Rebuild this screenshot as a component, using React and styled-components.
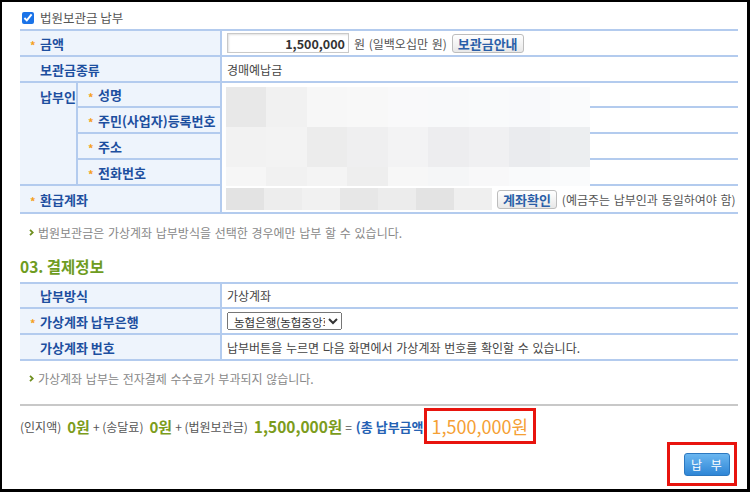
import styled, { createGlobalStyle } from "styled-components";

const LINE = "#b3cbee";
const LABEL_BG = "#eef4fc";
const LABEL_BLUE = "#1d4f9f";

const GlobalStyle = createGlobalStyle`
  html, body {
    margin: 0;
    padding: 0;
    background: #fff;
  }
  * {
    box-sizing: border-box;
  }
`;

const Frame = styled.div`
  width: 750px;
  height: 492px;
  border: solid #000;
  border-width: 2px 3px 3px 2px;
  padding: 7px 9px 0 18px;
  background: #fff;
  overflow: hidden;
  font-family: "Noto Sans CJK KR", "Noto Sans", sans-serif;
  color: #444;
`;

const CheckRow = styled.label`
  display: flex;
  align-items: center;
  height: 17px;
  margin: 0 0 3px 2px;
  font-size: 12.5px;
  color: #555;
  input {
    width: 12px;
    height: 12px;
    margin: 0 6px 0 0;
    accent-color: #1a73e8;
  }
`;

const FormGrid = styled.div`
  position: relative;
  display: grid;
  grid-template-columns: ${(p) => p.$cols};
  grid-template-rows: ${(p) => p.$rows};
  border-top: 2px solid ${LINE};
`;

const Label = styled.div`
  grid-column: span ${(p) => p.$span || 1};
  grid-row: span ${(p) => p.$rowSpan || 1};
  display: flex;
  align-items: ${(p) => (p.$top ? "flex-start" : "center")};
  padding: ${(p) => (p.$top ? "4px 0 0 10px" : "0 0 0 10px")};
  background: ${LABEL_BG};
  border-bottom: 2px solid ${LINE};
  border-right: 2px solid ${LINE};
  font-size: 13px;
  font-weight: bold;
  color: ${LABEL_BLUE};
  white-space: nowrap;
`;

const Star = styled.span`
  position: relative;
  top: 2px;
  display: inline-block;
  width: 10px;
  color: #f5a020;
  font-size: 11px;
  font-weight: bold;
  visibility: ${(p) => (p.$on ? "visible" : "hidden")};
`;

const Value = styled.div`
  display: flex;
  align-items: center;
  padding-left: ${(p) => p.$pl ?? 5}px;
  border-bottom: 2px solid ${LINE};
  font-size: 12px;
  color: #444;
  white-space: nowrap;
  word-spacing: 1px;
`;

const AmountInput = styled.input`
  width: 122px;
  height: 20px;
  padding: 0 3px 0 0;
  border: 1px solid #c9c9c9;
  box-shadow: inset 1px 1px 2px rgba(0, 0, 0, 0.12);
  text-align: right;
  font-family: inherit;
  font-size: 12.5px;
  font-weight: bold;
  color: #333;
  outline: none;
`;

const Muted = styled.span`
  margin-left: ${(p) => p.$ml || 0}px;
  font-size: 12px;
  color: #555;
`;

const GrayButton = styled.button`
  height: 19px;
  margin-left: ${(p) => p.$ml || 0}px;
  padding: 0 5px;
  border: 1px solid #bdbdbd;
  border-radius: 3px;
  background: linear-gradient(#ffffff, #e8e8e8);
  font-family: inherit;
  font-size: 13px;
  font-weight: bold;
  color: #2a5fa8;
  line-height: 17px;
  word-spacing: 0;
`;

const Mosaic = styled.div`
  display: grid;
  grid-template-columns: repeat(${(p) => p.$cols}, 1fr);
  grid-template-rows: ${(p) => p.$rows};
  width: ${(p) => p.$w}px;
  height: ${(p) => p.$h}px;
`;

const Overlay = styled.div`
  position: absolute;
  left: 202px;
  top: 56px;
  padding-left: 4px;
  background: #fff;
`;

const Tile = styled.div`
  background: ${(p) => p.$c};
`;

const Note = styled.div`
  display: flex;
  align-items: center;
  height: 18px;
  margin-top: ${(p) => p.$mt}px;
  padding-left: 9px;
  font-size: 12px;
  color: #888;
  word-spacing: 1px;
  svg {
    margin-right: 4px;
  }
`;

const Heading = styled.h3`
  height: 20px;
  margin: 15px 0 6px;
  font-size: 15.5px;
  font-weight: bold;
  line-height: 20px;
  color: #6e9c21;
`;

const BankSelect = styled.select`
  width: 115px;
  height: 18px;
  padding: 0 0 0 2px;
  font-family: inherit;
  font-size: 11.5px;
  color: #333;
`;

const Divider = styled.hr`
  margin: 17px 0 0;
  border: 0;
  border-top: 2px solid #c8c8c8;
`;

const SumRow = styled.div`
  display: flex;
  align-items: center;
  height: 36px;
  margin-top: 2px;
  white-space: pre;
`;

const Green = styled.span`
  margin: 0 3px 0 6px;
  font-size: ${(p) => p.$fs || 15}px;
  font-weight: bold;
  color: #7c9c1c;
`;

const Total = styled.span`
  margin-left: 4px;
  font-size: 13px;
  font-weight: bold;
  color: #2461b3;
`;

const RedBox = styled.div`
  display: flex;
  align-items: center;
  justify-content: ${(p) => (p.$center ? "center" : "flex-start")};
  flex: none;
  width: ${(p) => p.$w}px;
  height: ${(p) => p.$h}px;
  margin-left: ${(p) => p.$ml || 0}px;
  padding-left: ${(p) => (p.$center ? 0 : 4)}px;
  border: 3px solid #e8140e;
  background: #fff;
`;

const Orange = styled.span`
  font-size: 18px;
  color: #f5a034;
`;

const Footer = styled.div`
  display: flex;
  justify-content: flex-end;
  margin: -2px 1px 0 0;
`;

const PayButton = styled.button`
  width: 46px;
  height: 23px;
  margin-left: 9px;
  border: 1px solid #2c78c0;
  border-radius: 3px;
  background: linear-gradient(#6ab6f0, #2f86d6);
  font-family: inherit;
  font-size: 12px;
  color: #fff;
  letter-spacing: 3px;
  padding: 0 0 0 3px;
`;

const Arrow = () => (
  <svg width="5" height="7" viewBox="0 0 5 7">
    <polyline points="1,0.8 3.8,3.5 1,6.2" fill="none" stroke="#6f8f1f" strokeWidth="1.8" />
  </svg>
);

const PERSON_TILES = [
  "#e8e8e8", "#f1f1f1", "#f7f7f7", "#f8f8f8", "#f9f9fa", "#f8f9fa", "#f9fafb", "#f8f9fb", "#fafbfc",
  "#f2f2f2", "#f3f3f3", "#ececec", "#efeff0", "#f3f3f4", "#ededef", "#f0f0f2", "#eaebee", "#eceef0",
  "#f6f6f6", "#f1f1f1", "#f4f4f4", "#eeeeee", "#f7f7f7", "#f5f6f7", "#f8f8f9", "#f9fafb", "#fafbfc",
];

const ACCOUNT_TILES = ["#e3e3e3", "#ededed", "#f1f1f1", "#e7e7e7", "#ececec", "#e3e3e3", "#efefef"];

export default function App() {
  return (
    <>
      <GlobalStyle />
      <Frame>
        <CheckRow>
          <input type="checkbox" defaultChecked />
          법원보관금 납부
        </CheckRow>

        <FormGrid $cols="58px 144px 1fr" $rows="26px 26px 25px 26px 26px 26px 28px">
          <Label $span={2}><Star $on>*</Star>금액</Label>
          <Value>
            <AmountInput readOnly value="1,500,000" />
            <Muted $ml={5}>원 (일백오십만 원)</Muted>
            <GrayButton $ml={5}>보관금안내</GrayButton>
          </Value>

          <Label $span={2}><Star />보관금종류</Label>
          <Value>경매예납금</Value>

          <Label $rowSpan={4} $top><Star />납부인</Label>
          <Label><Star $on>*</Star>성명</Label>
          <Value />
          <Label><Star $on>*</Star>주민(사업자)등록번호</Label>
          <Value />
          <Label><Star $on>*</Star>주소</Label>
          <Value />
          <Label><Star $on>*</Star>전화번호</Label>
          <Value />

          <Label $span={2}><Star $on>*</Star>환급계좌</Label>
          <Value $pl={4}>
            <Mosaic $cols={7} $rows="1fr" $w={266} $h={22}>
              {ACCOUNT_TILES.map((c, i) => <Tile key={i} $c={c} />)}
            </Mosaic>
            <GrayButton $ml={5}>계좌확인</GrayButton>
            <Muted $ml={5}>(예금주는 납부인과 동일하여야 함)</Muted>
          </Value>

          <Overlay>
            <Mosaic $cols={9} $rows="40px 40px 19px" $w={364} $h={99}>
              {PERSON_TILES.map((c, i) => <Tile key={i} $c={c} />)}
            </Mosaic>
          </Overlay>
        </FormGrid>

        <Note $mt={9}>
          <Arrow />
          법원보관금은 가상계좌 납부방식을 선택한 경우에만 납부 할 수 있습니다.
        </Note>

        <Heading>03. 결제정보</Heading>

        <FormGrid $cols="202px 1fr" $rows="25px 26px 26px">
          <Label><Star />납부방식</Label>
          <Value>가상계좌</Value>
          <Label><Star $on>*</Star>가상계좌 납부은행</Label>
          <Value>
            <BankSelect defaultValue="nh">
              <option value="nh">농협은행(농협중앙회)</option>
              <option value="kb">국민은행</option>
              <option value="sh">신한은행</option>
            </BankSelect>
          </Value>
          <Label><Star />가상계좌 번호</Label>
          <Value>납부버튼을 누르면 다음 화면에서 가상계좌 번호를 확인할 수 있습니다.</Value>
        </FormGrid>

        <Note $mt={8}>
          <Arrow />
          가상계좌 납부는 전자결제 수수료가 부과되지 않습니다.
        </Note>

        <Divider />

        <SumRow>
          <Muted>(인지액)</Muted>
          <Green>0원</Green>
          <Muted>+ (송달료)</Muted>
          <Green>0원</Green>
          <Muted>+ (법원보관금)</Muted>
          <Green $fs={15.5}>1,500,000원</Green>
          <Muted>=</Muted>
          <Total>(총 납부금액)</Total>
          <RedBox $w={112} $h={36} $ml={-4}>
            <Orange>1,500,000원</Orange>
          </RedBox>
        </SumRow>

        <Footer>
          <RedBox $w={70} $h={44} $center>
            <PayButton>납 부</PayButton>
          </RedBox>
        </Footer>
      </Frame>
    </>
  );
}
